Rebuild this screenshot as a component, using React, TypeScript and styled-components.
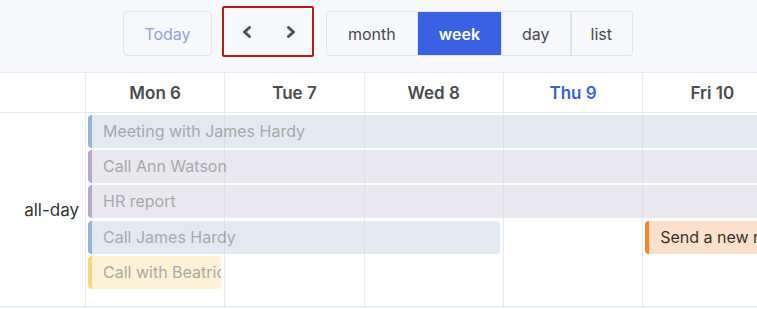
import styled, { createGlobalStyle } from 'styled-components';

type Tone = 'blue' | 'purple' | 'yellow' | 'orange';

type CalEvent = {
  title: string;
  start: number;
  end: number;
  row: number;
  tone: Tone;
  past?: boolean;
};

const tones: Record<Tone, { bg: string; border: string }> = {
  blue: { bg: '#cfdce9', border: '#4b82b6' },
  purple: { bg: '#dad9e4', border: '#8973aa' },
  yellow: { bg: '#fce8bb', border: '#f5bc21' },
  orange: { bg: '#fde0c9', border: '#fb8427' },
};

const days = [
  { label: 'Mon 6' },
  { label: 'Tue 7' },
  { label: 'Wed 8' },
  { label: 'Thu 9', today: true },
  { label: 'Fri 10' },
  { label: 'Sat 11' },
];

const events: CalEvent[] = [
  { title: 'Meeting with James Hardy', start: 2, end: 8, row: 1, tone: 'blue', past: true },
  { title: 'Call Ann Watson', start: 2, end: 8, row: 2, tone: 'purple', past: true },
  { title: 'HR report', start: 2, end: 8, row: 3, tone: 'purple', past: true },
  { title: 'Call James Hardy', start: 2, end: 5, row: 4, tone: 'blue', past: true },
  { title: 'Call with Beatrice', start: 2, end: 3, row: 5, tone: 'yellow', past: true },
  { title: 'Send a new report', start: 6, end: 8, row: 4, tone: 'orange' },
];

const views = ['month', 'week', 'day', 'list'];

// chunky chevron, same shape as the calendar's nav arrows
const Chevron = ({ dir }: { dir: 'left' | 'right' }) => (
  <svg width='12' height='14' viewBox='0 0 12 14'>
    <path
      d={dir === 'left' ? 'M8.5 2.5 L3.5 7 L8.5 11.5' : 'M3.5 2.5 L8.5 7 L3.5 11.5'}
      fill='none'
      stroke='currentColor'
      strokeWidth='3'
      strokeLinecap='round'
      strokeLinejoin='round'
    />
  </svg>
);

function App() {
  return (
    <>
      <GlobalStyle />
      <Page>
        <Toolbar>
          <TodayButton>Today</TodayButton>
          <NavBox>
            <NavButton aria-label='previous'>
              <Chevron dir='left' />
            </NavButton>
            <NavButton aria-label='next'>
              <Chevron dir='right' />
            </NavButton>
          </NavBox>
          <ViewGroup>
            {views.map((v) => (
              <ViewButton key={v} $active={v === 'week'}>
                {v}
              </ViewButton>
            ))}
          </ViewGroup>
        </Toolbar>

        <Calendar>
          <HeaderRow>
            <AxisHead />
            {days.map((d) => (
              <DayHead key={d.label} $today={d.today}>
                {d.label}
              </DayHead>
            ))}
          </HeaderRow>

          <AllDay>
            <AxisLabel>all-day</AxisLabel>
            {days.map((d, i) => (
              <DayCell key={d.label} style={{ gridColumn: i + 2 }} />
            ))}
            {events.map((e) => (
              <Event
                key={e.title}
                $tone={e.tone}
                $past={e.past}
                style={{ gridColumn: `${e.start} / ${e.end}`, gridRow: e.row }}
              >
                {e.title}
              </Event>
            ))}
          </AllDay>
        </Calendar>
      </Page>
    </>
  );
}

const GlobalStyle = createGlobalStyle`
  body {
    margin: 0;
    background: #f6f8fc;
    font-family: Inter, 'Noto Sans', sans-serif;
  }
`;

const Page = styled.div`
  width: 757px;
  height: 309px;
  overflow: hidden;
`;

const Toolbar = styled.div`
  height: 73px;
  box-sizing: border-box;
  display: flex;
  align-items: flex-start;
  padding: 11px 0 0 123px;
  gap: 10px;
  background: #f6f8fc;
  border-bottom: 1px solid #e6e9f0;
`;

const TodayButton = styled.button`
  width: 89px;
  height: 45px;
  border: 1px solid #dfe4f0;
  border-radius: 4px;
  background: #f6f8fc;
  color: #8fa2dd;
  font-family: inherit;
  font-size: 16px;
`;

const NavBox = styled.div`
  margin-top: -5px;
  width: 92px;
  height: 51px;
  box-sizing: border-box;
  border: 2px solid #b31b1b;
  border-radius: 2px;
  display: flex;
  align-items: center;
  justify-content: space-between;
  padding: 0 15px 0 17px;
`;

const NavButton = styled.button`
  border: 0;
  background: none;
  padding: 0;
  display: flex;
  color: #4b4f58;
`;

const ViewGroup = styled.div`
  margin-left: 2px;
  display: flex;
  height: 45px;
  border: 1px solid #dfe3ec;
  border-radius: 4px;
  overflow: hidden;
  box-sizing: border-box;
`;

const ViewButton = styled.button<{ $active?: boolean }>`
  padding: 0 21px;
  border: 0;
  border-left: 1px solid #dfe3ec;
  background: ${(p) => (p.$active ? '#3a60e3' : '#f6f8fc')};
  color: ${(p) => (p.$active ? '#fff' : '#474a52')};
  font-family: inherit;
  font-size: 16px;
  font-weight: ${(p) => (p.$active ? 600 : 400)};

  &:first-child {
    border-left: 0;
  }
  &:nth-child(3) {
    padding: 0 20px;
  }
  &:last-child {
    padding: 0 20px 0 19px;
    border-left: 2px solid #dfe3ec;
  }
`;

const Calendar = styled.div`
  background: #fff;
  width: 921px;
  border-bottom: 1px solid #e6e9f0;
`;

const columns = '85px repeat(6, 139.3px)';

const HeaderRow = styled.div`
  display: grid;
  grid-template-columns: ${columns};
  height: 39px;
  border-bottom: 1px solid #e6e9f0;
`;

const AxisHead = styled.div``;

const DayHead = styled.div<{ $today?: boolean }>`
  border-left: 1px solid #e6e9f0;
  display: flex;
  align-items: center;
  justify-content: center;
  font-size: 17px;
  font-weight: 600;
  color: ${(p) => (p.$today ? '#3a5fd6' : '#4a4b50')};
`;

const AllDay = styled.div`
  display: grid;
  grid-template-columns: ${columns};
  grid-template-rows: repeat(5, 35.2px) 1fr;
  height: 193px;
`;

const AxisLabel = styled.div`
  grid-column: 1;
  grid-row: 1 / -1;
  display: flex;
  align-items: center;
  justify-content: flex-end;
  padding-right: 6px;
  font-size: 17px;
  color: #333;
`;

const DayCell = styled.div`
  grid-row: 1 / -1;
  border-left: 1px solid #e6e9f0;
`;

const Event = styled.div<{ $tone: Tone; $past?: boolean }>`
  margin: 2px 3px 0 3px;
  height: 33px;
  line-height: 33px;
  box-sizing: border-box;
  padding-left: 11px;
  border-left: 4px solid ${(p) => tones[p.$tone].border};
  border-radius: 4px;
  background: ${(p) => tones[p.$tone].bg};
  color: ${(p) => (p.$past ? '#707070' : '#333')};
  opacity: ${(p) => (p.$past ? 0.6 : 1)};
  font-size: 16px;
  white-space: nowrap;
  overflow: hidden;
`;

export default App;
